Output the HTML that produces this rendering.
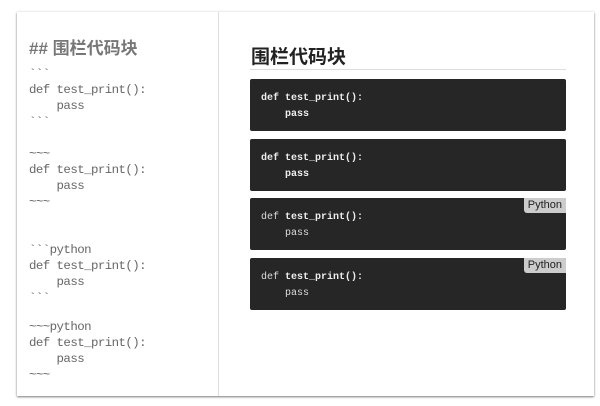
<!DOCTYPE html>
<html><head><meta charset="utf-8"><style>
body{margin:0;width:600px;height:406px;background:#fff;position:relative;overflow:hidden;font-family:"Liberation Sans","Noto Sans CJK SC",sans-serif}
.card{position:absolute;left:17px;top:12px;width:577px;height:384px;background:#fff;box-shadow:0 1px 2px rgba(0,0,0,.5),0 0 3px rgba(0,0,0,.08)}
.div{position:absolute;left:218px;top:12px;width:1px;height:384px;background:#ddd}
.l{position:absolute;left:29px;font-family:"Liberation Mono",monospace;font-size:12.4px;letter-spacing:-0.55px;color:#666;white-space:pre;line-height:16px}
h2{position:absolute;left:29px;top:34px;margin:0;font-size:17px;color:#777;font-weight:bold}
h1{position:absolute;left:251px;top:42px;margin:0;font-size:19px;color:#222;font-weight:bold}
.rule{position:absolute;left:250px;top:69px;width:316px;height:1px;background:#ddd}
.b{position:absolute;left:250px;width:316px;height:52px;background:#262626;border-radius:2px}
.b pre{margin:0;position:absolute;left:11px;top:12px;font-family:"Liberation Mono",monospace;font-size:10px;line-height:16px;color:#eee;font-weight:bold}
.b.n pre{font-weight:normal;color:#ddd}
.tag{position:absolute;right:0;top:0;background:#ccc;color:#222;font-size:11px;padding:1px 4px 2px;border-radius:0 2px 0 3px}
</style></head><body>
<div class="card"></div><div class="div"></div>
<h2>## 围栏代码块</h2>
<div class="l" style="top:66px">&#96;&#96;&#96;
def test_print():
    pass
&#96;&#96;&#96;</div>
<div class="l" style="top:146px">~~~
def test_print():
    pass
~~~</div>
<div class="l" style="top:242px">&#96;&#96;&#96;python
def test_print():
    pass
&#96;&#96;&#96;</div>
<div class="l" style="top:319px">~~~python
def test_print():
    pass
~~~</div>
<h1>围栏代码块</h1><div class="rule"></div>
<div class="b" style="top:79px"><pre>def test_print():
    pass</pre></div>
<div class="b" style="top:139px"><pre>def test_print():
    pass</pre></div>
<div class="b n" style="top:198px"><span class="tag">Python</span><pre>def <b style="color:#eee">test_print():</b>
    pass</pre></div>
<div class="b n" style="top:258px"><span class="tag">Python</span><pre>def <b style="color:#eee">test_print():</b>
    pass</pre></div>
</body></html>
